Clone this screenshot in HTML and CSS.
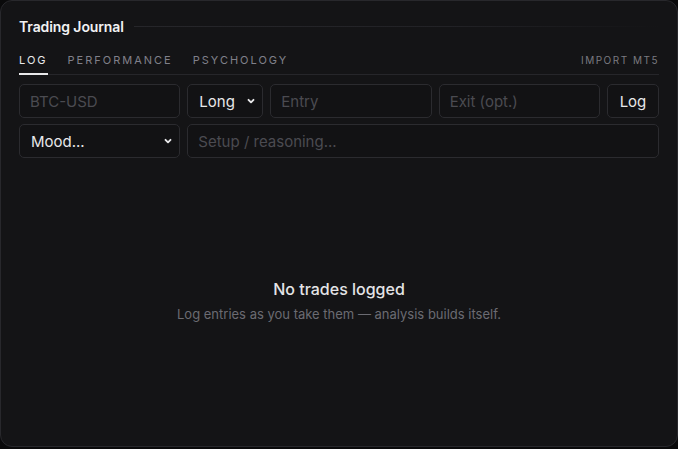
FILE: index.html
```html
<!DOCTYPE html>
<html lang="en">
<head>
<meta charset="utf-8">
<title>Trading Journal</title>
<link rel="stylesheet" href="styles.css">
</head>
<body>
<section class="card">
  <header class="head">
    <h1 class="title">Trading Journal</h1>
    <span class="rule"></span>
  </header>
  <nav class="tabs">
    <span class="tab active">LOG</span>
    <span class="tab">PERFORMANCE</span>
    <span class="tab">PSYCHOLOGY</span>
    <span class="spacer"></span>
    <span class="tab import">IMPORT MT5</span>
  </nav>
  <form class="form">
    <input class="field" placeholder="BTC-USD">
    <div class="sel">
      <select class="field select"><option>Long</option><option>Short</option></select>
      <svg class="chev" viewBox="0 0 10 10" width="10" height="10"><path d="M2.5 3.8 L5 6.3 L7.5 3.8" fill="none" stroke="#e8e8ea" stroke-width="1.9" stroke-linecap="round" stroke-linejoin="round"/></svg>
    </div>
    <input class="field" placeholder="Entry">
    <input class="field" placeholder="Exit (opt.)">
    <button type="button" class="btn">Log</button>
    <div class="sel">
      <select class="field select"><option>Mood...</option></select>
      <svg class="chev" viewBox="0 0 10 10" width="10" height="10"><path d="M2.5 3.8 L5 6.3 L7.5 3.8" fill="none" stroke="#e8e8ea" stroke-width="1.9" stroke-linecap="round" stroke-linejoin="round"/></svg>
    </div>
    <input class="field wide" placeholder="Setup / reasoning...">
  </form>
  <div class="empty">
    <p class="empty-title">No trades logged</p>
    <p class="empty-sub">Log entries as you take them — analysis builds itself.</p>
  </div>
</section>
</body>
</html>
```

FILE: styles.css
```css
* { box-sizing: border-box; }
html, body { margin: 0; padding: 0; }
body {
  background: #0a0a0b;
  font-family: Inter, "Noto Sans", sans-serif;
  width: 678px;
  height: 449px;
}
.card {
  width: 678px;
  height: 447px;
  background: #141416;
  border: 1px solid #28282c;
  border-radius: 12px;
  padding: 15px 18px 0 18px;
  display: flex;
  flex-direction: column;
}
.head {
  display: flex;
  align-items: center;
  gap: 10px;
  height: 20px;
}
.title {
  margin: 0;
  font-size: 14px;
  font-weight: 600;
  color: #f2f2f3;
  letter-spacing: -0.1px;
}
.rule {
  flex: 1;
  height: 1px;
  background: linear-gradient(to right, #26262a 0%, #222226 60%, rgba(34,34,38,0) 100%);
}
.tabs {
  margin-top: 12px;
  display: flex;
  align-items: stretch;
  gap: 22px;
  border-bottom: 1px solid #26262a;
  height: 27px;
}
.tab {
  font-size: 11px;
  letter-spacing: 2px;
  color: #80808a;
  line-height: 14px;
  padding-top: 5px;
  margin-right: -2px;
}
.tab.active {
  color: #e8e8ea;
  border-bottom: 2px solid #e8e8ea;
  margin-bottom: -1px;
}
.spacer { flex: 1; }
.tab.import {
  font-size: 10px;
  letter-spacing: 1.5px;
  color: #7a7a80;
  margin-right: 0;
}
.form {
  margin: 9px 0 0 0;
  display: grid;
  grid-template-columns: 1fr 76px 1fr 1fr 52px;
  column-gap: 7px;
  row-gap: 6px;
}
.field {
  height: 34px;
  background: #121214;
  border: 1px solid #2b2b2f;
  border-radius: 5px;
  color: #e8e8ea;
  font-family: inherit;
  font-size: 15px;
  padding: 0 10px;
  outline: none;
  width: 100%;
  min-width: 0;
}
.field::placeholder { color: #4b4b51; }
.wide { grid-column: 2 / 6; }
.sel { position: relative; }
.select {
  appearance: none;
  -webkit-appearance: none;
  padding: 0 22px 0 11px;
}
.chev {
  position: absolute;
  right: 7px;
  top: 12px;
  pointer-events: none;
}
.btn {
  height: 34px;
  background: #121214;
  border: 1px solid #2b2b2f;
  border-radius: 5px;
  color: #e8e8ea;
  font-family: inherit;
  font-size: 15px;
  padding: 0;
}
.empty {
  flex: 1;
  display: flex;
  flex-direction: column;
  align-items: center;
  padding-top: 121px;
}
.empty-title {
  margin: 0;
  font-size: 16px;
  font-weight: 500;
  color: #e4e4e6;
  line-height: 20px;
}
.empty-sub {
  margin: 7px 0 0 0;
  font-size: 13px;
  color: #6b6b72;
  line-height: 16px;
}
```
